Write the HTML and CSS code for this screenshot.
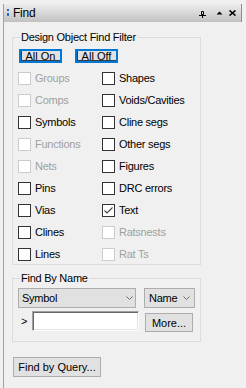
FILE: index.html
```html
<!doctype html>
<html lang="en">
  <head>
    <meta charset="UTF-8" />
    <title>Find</title>
    <link rel="stylesheet" href="styles.css">
  </head>
  <body>
    <div class="panel">
      <div class="titlebar">
        <svg class="title-icon" width="2" height="8" viewBox="0 0 2 8">
          <rect x="0" y="0" width="2" height="2" fill="#1c6fd1"/>
          <rect x="0" y="4" width="2" height="3" fill="#1c6fd1"/>
        </svg>
        <span class="title">Find</span>
        <svg class="tool pin" width="7" height="7" viewBox="0 0 7 7">
          <path d="M2.5 0.5h2v3h-2z" fill="none" stroke="#000"/>
          <path d="M0 4.5h7M3.5 4.5v2.5" stroke="#000"/>
        </svg>
        <svg class="tool up" width="7" height="4" viewBox="0 0 7 4">
          <path d="M3.5 0.5L6.5 3.5H0.5z" fill="#000"/>
        </svg>
        <svg class="tool close" width="7" height="6" viewBox="0 0 7 6">
          <path d="M0.5 0.5l6 5M6.5 0.5l-6 5" stroke="#000" stroke-width="1.6"/>
        </svg>
      </div>

      <div class="content">
        <div class="group">
          <div class="group-title">Design Object Find Filter</div>
          <div class="toggles">
            <button class="toggle">All On</button>
            <button class="toggle">All Off</button>
          </div>
          <div class="checks">
            <label class="check disabled"><span class="box"></span>Groups</label>
            <label class="check"><span class="box"></span>Shapes</label>
            <label class="check disabled"><span class="box"></span>Comps</label>
            <label class="check"><span class="box"></span>Voids/Cavities</label>
            <label class="check"><span class="box"></span>Symbols</label>
            <label class="check"><span class="box"></span>Cline segs</label>
            <label class="check disabled"><span class="box"></span>Functions</label>
            <label class="check"><span class="box"></span>Other segs</label>
            <label class="check disabled"><span class="box"></span>Nets</label>
            <label class="check"><span class="box"></span>Figures</label>
            <label class="check"><span class="box"></span>Pins</label>
            <label class="check"><span class="box"></span>DRC errors</label>
            <label class="check"><span class="box"></span>Vias</label>
            <label class="check">
              <span class="box">
                <svg width="11" height="11" viewBox="0 0 11 11">
                  <polyline points="1.5,5.5 4,8 9.5,2.5" fill="none" stroke="#444" stroke-width="1.1"/>
                </svg>
              </span>Text
            </label>
            <label class="check"><span class="box"></span>Clines</label>
            <label class="check disabled"><span class="box"></span>Ratsnests</label>
            <label class="check"><span class="box"></span>Lines</label>
            <label class="check disabled"><span class="box"></span>Rat Ts</label>
          </div>
        </div>

        <div class="group by-name">
          <div class="group-title">Find By Name</div>
          <div class="select-row">
            <div class="select kind">Symbol
              <svg width="7" height="4" viewBox="0 0 7 4"><path d="M0.5 0.5l3 3 3-3" fill="none" stroke="#6d6d6d"/></svg>
            </div>
            <div class="select field">Name
              <svg width="7" height="4" viewBox="0 0 7 4"><path d="M0.5 0.5l3 3 3-3" fill="none" stroke="#6d6d6d"/></svg>
            </div>
          </div>
          <div class="input-row">
            <span class="prompt">&gt;</span>
            <input class="name-input" type="text">
            <button class="btn more">More...</button>
          </div>
        </div>

        <button class="btn query">Find by Query...</button>
      </div>
    </div>
  </body>
</html>
```

FILE: styles.css
```css
* {
  box-sizing: border-box;
}

body {
  margin: 0;
  background: #f0f0f0;
  font-family: "Liberation Sans", Arial, sans-serif;
  font-size: 11px;
  letter-spacing: -0.25px;
  color: #000;
}

.panel {
  margin: 4px 0 0 3px;
  width: 239px;
  height: 384px;
  border-left: 1px solid #a0a0a0;
}

.titlebar {
  height: 18px;
  display: flex;
  align-items: center;
  padding-left: 3px;
  background: linear-gradient(#ededed, #c1c1c1);
  border-right: 1px solid #8c8c8c;
}

.title-icon {
  display: block;
}

.title {
  margin-left: 4px;
  font-size: 12px;
  line-height: 14px;
}

.tool {
  display: block;
}

.pin {
  margin-left: auto;
  margin-top: 2px;
}

.up {
  margin-left: 10px;
}

.close {
  margin-left: 6px;
  margin-right: 5px;
}

.content {
  padding: 15px 0 0 8px;
}

.group {
  width: 189px;
  border: 1px solid #dcdcdc;
  padding-bottom: 3px;
}

.group-title {
  display: table;
  margin: -7px 0 0 7px;
  padding: 0 1px;
  line-height: 13px;
  background: #f0f0f0;
}

.toggles {
  display: flex;
  gap: 13px;
  margin: 5px 0 0 6px;
}

.toggle {
  width: 43px;
  height: 14px;
  padding: 0;
  border: 2px solid #0078d7;
  background: #e1e1e1;
  box-shadow: inset 1px -1px 0 #3c3c3c;
  font: inherit;
  line-height: 10px;
  color: #000;
}

.checks {
  display: grid;
  grid-template-columns: 84px 1fr;
  row-gap: 9px;
  margin-top: 9px;
  padding-left: 5px;
}

.check {
  display: flex;
  align-items: center;
  gap: 4px;
  height: 13px;
  line-height: 13px;
  white-space: nowrap;
}

.box {
  width: 13px;
  height: 13px;
  flex: none;
  border: 1px solid #333;
  background: #fff;
}

.box svg {
  display: block;
}

.check.disabled {
  color: #a0a0a0;
}

.check.disabled .box {
  border-color: #cccccc;
}

.by-name {
  margin-top: 13px;
  padding-bottom: 9px;
}

.select-row {
  display: flex;
  gap: 8px;
  margin: 3px 0 0 5px;
}

.select {
  height: 20px;
  display: flex;
  align-items: center;
  justify-content: space-between;
  border: 1px solid #adadad;
  background: #e1e1e1;
}

.select svg {
  display: block;
}

.select.kind {
  width: 118px;
  padding: 0 2px 0 3px;
}

.select.field {
  width: 51px;
  padding: 0 4px 0 4px;
}

.input-row {
  display: flex;
  align-items: flex-start;
  margin: 3px 0 0 5px;
}

.prompt {
  width: 14px;
  padding: 4px 0 0 3px;
  line-height: 13px;
}

.name-input {
  width: 107px;
  height: 20px;
  margin: 0;
  padding: 0 2px;
  border: 1px solid;
  border-color: #a0a0a0 #ffffff #ffffff #a0a0a0;
  box-shadow: inset 1px 1px 0 #696969, inset -1px -1px 0 #e3e3e3;
  background: #fff;
  font: inherit;
  outline: none;
}

.btn {
  padding: 0;
  border: 1px solid #adadad;
  background: #e1e1e1;
  font: inherit;
  color: #000;
}

.more {
  width: 48px;
  height: 19px;
  margin: 2px 0 0 6px;
}

.query {
  display: block;
  width: 88px;
  height: 20px;
  margin: 15px 0 0 1px;
}
```
